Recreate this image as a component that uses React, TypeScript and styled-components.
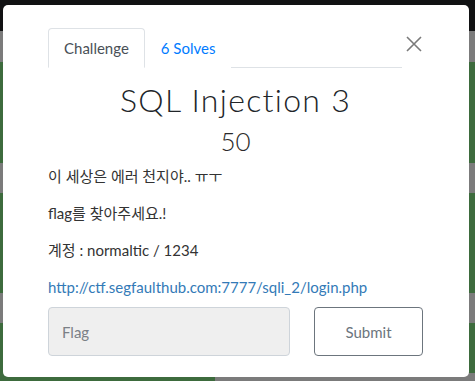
import styled, { createGlobalStyle } from "styled-components"

const GlobalStyle = createGlobalStyle`
  html, body {
    margin: 0;
    padding: 0;
    height: 100%;
  }
  body {
    font-family: "Lato", "Noto Sans CJK KR", sans-serif;
    background:
      linear-gradient(to right, transparent 215px, #7b7b7b 215px) left bottom / 100% 8px no-repeat,
      linear-gradient(
        to bottom,
        #111213 0 31px,
        #7b7b7b 31px 62px,
        #3d6b3d 62px 163px,
        #7b7b7b 163px 193px,
        #3d6b3d 193px 293px,
        #7b7b7b 293px 323px,
        #3d6b3d 323px
      );
  }
`

const Backdrop = styled.div`
  padding: 5px 6px 4px 3px;
`

const Modal = styled.div`
  background: #fff;
  border-radius: 5px;
  height: 372px;
  box-sizing: border-box;
  padding: 23px 46px 0 45px;
`

const Header = styled.div`
  display: flex;
  align-items: flex-start;
`

const Nav = styled.nav`
  display: flex;
  width: 354px;
  border-bottom: 1px solid #dee2e6;
`

const Tab = styled.span<{ active?: boolean }>`
  display: block;
  height: 38px;
  line-height: 38px;
  padding: 0 15px;
  margin-bottom: -1px;
  font-size: 15px;
  border: 1px solid ${p => (p.active ? "#dee2e6" : "transparent")};
  border-bottom-color: ${p => (p.active ? "#fff" : "transparent")};
  border-radius: 4px 4px 0 0;
  background: #fff;
  color: ${p => (p.active ? "#495057" : "#007bff")};
  cursor: pointer;
`

const Close = styled.button`
  margin: 8px 0 0 4px;
  padding: 0;
  width: 16px;
  height: 16px;
  border: 0;
  background: none;
  display: flex;
`

const Title = styled.h1`
  margin: 13px 0 0;
  text-align: center;
  font-size: 32px;
  line-height: 38px;
  font-weight: 300;
  letter-spacing: 1.3px;
  color: #212529;
`

const Points = styled.h2`
  margin: 6px 0 0;
  text-align: center;
  font-size: 26px;
  line-height: 32px;
  font-weight: 300;
  color: #2a2a2a;
`

const Description = styled.div`
  margin-top: 8px;
  font-size: 15px;
  color: #333;
  p {
    margin: 0 0 15px;
    line-height: 22px;
  }
  p:last-child {
    margin-top: 1px;
  }
  a {
    color: #337ab7;
    text-decoration: none;
  }
`

const Form = styled.form`
  display: grid;
  grid-template-columns: 242px 109px;
  column-gap: 24px;
  margin-top: -6px;
`

const FlagInput = styled.input`
  height: 49px;
  box-sizing: border-box;
  padding: 0 13px;
  font-family: inherit;
  font-size: 15px;
  background: #efefef;
  border: 1px solid #ced4da;
  border-radius: 4px;
  color: #495057;
  &::placeholder {
    color: #7b8086;
  }
`

const SubmitButton = styled.button`
  height: 49px;
  font-family: inherit;
  font-size: 15px;
  color: #6c757d;
  background: #fff;
  border: 1px solid #6c757d;
  border-radius: 4px;
`

export default function App() {
  return (
    <>
      <GlobalStyle />
      <Backdrop>
        <Modal>
          <Header>
            <Nav>
              <Tab active>Challenge</Tab>
              <Tab>6 Solves</Tab>
            </Nav>
            <Close aria-label="Close">
              <svg width="16" height="16" viewBox="0 0 16 16">
                <path d="M1 1 L15 15 M15 1 L1 15" stroke="#7a7a7a" strokeWidth="1.6" />
              </svg>
            </Close>
          </Header>
          <Title>SQL Injection 3</Title>
          <Points>50</Points>
          <Description>
            <p>이 세상은 에러 천지야.. ㅠㅜ</p>
            <p>flag를 찾아주세요.!</p>
            <p>계정 : normaltic / 1234</p>
            <p>
              <a href="#">http://ctf.segfaulthub.com:7777/sqli_2/login.php</a>
            </p>
          </Description>
          <Form onSubmit={e => e.preventDefault()}>
            <FlagInput placeholder="Flag" />
            <SubmitButton type="submit">Submit</SubmitButton>
          </Form>
        </Modal>
      </Backdrop>
    </>
  )
}
